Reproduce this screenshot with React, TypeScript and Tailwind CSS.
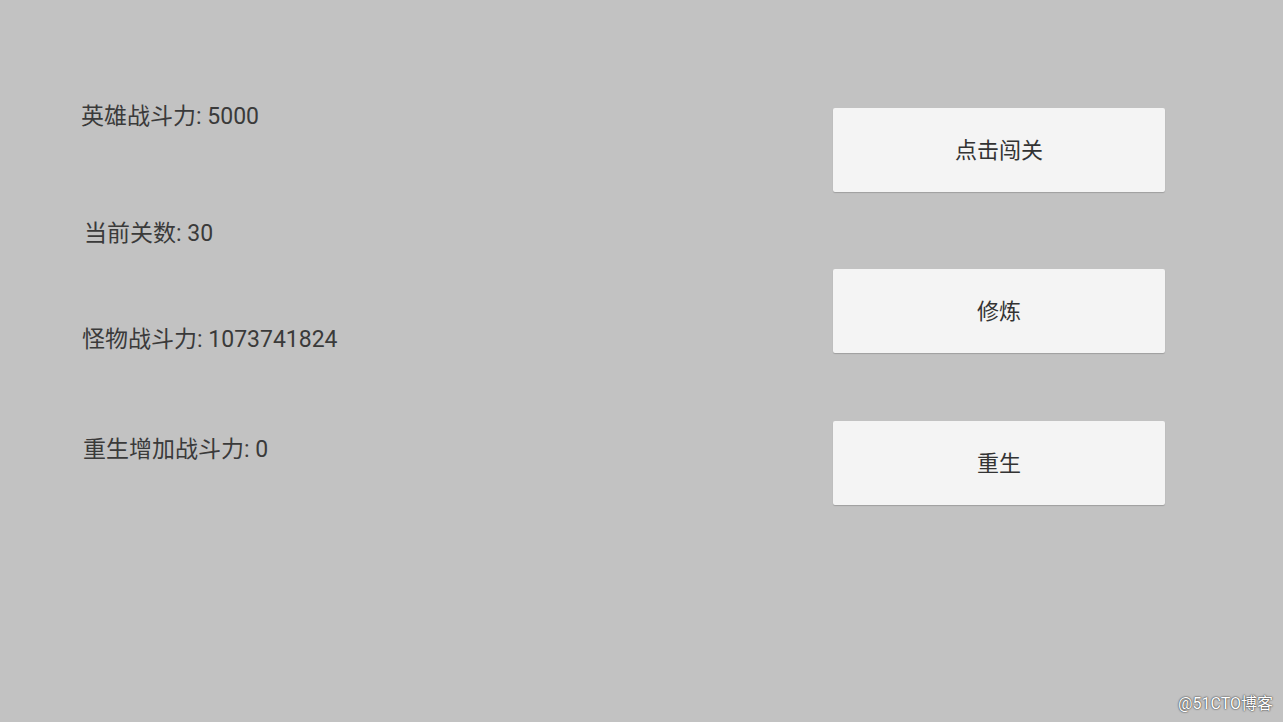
import React from 'react';

const stats = [
  { label: '英雄战斗力: 5000', cls: 'mt-[101px] ml-[81px]' },
  { label: '当前关数: 30', cls: 'mt-[86px] ml-[84px]' },
  { label: '怪物战斗力: 1073741824', cls: 'mt-[75px] ml-[82px]' },
  { label: '重生增加战斗力: 0', cls: 'mt-[79px] ml-[83px]' },
];

const buttons = [
  { label: '点击闯关', cls: 'mt-[108px]' },
  { label: '修炼', cls: 'mt-[77px]' },
  { label: '重生', cls: 'mt-[68px]' },
];

export default function App() {
  return (
    <div
      className="relative w-[1283px] h-[722px] overflow-hidden bg-[#c2c2c2] text-[#3a3a3a] flex"
      style={{ fontFamily: 'Roboto, "Noto Sans CJK SC", sans-serif' }}
    >
      {/* Left stats */}
      <div className="w-[833px] flex flex-col">
        {stats.map((s) => (
          <div key={s.label} className={`${s.cls} text-[23px] leading-[31px] whitespace-nowrap`}>
            {s.label}
          </div>
        ))}
      </div>

      {/* Right buttons */}
      <div className="w-[332px] flex flex-col">
        {buttons.map((b) => (
          <button
            key={b.label}
            className={`${b.cls} h-[84px] w-[332px] bg-[#f4f4f4] rounded-[2px] shadow-[0_1px_1px_rgba(0,0,0,0.18)] flex items-center justify-center text-[22px] text-[#333333]`}
          >
            {b.label}
          </button>
        ))}
      </div>

      {/* Watermark */}
      <div className="absolute right-[10px] bottom-[7px] text-[16px] leading-[22px] text-white [text-shadow:0_0_2px_rgba(0,0,0,0.75),0_0_1px_rgba(0,0,0,0.6)]">
        @51CTO博客
      </div>
    </div>
  );
}
